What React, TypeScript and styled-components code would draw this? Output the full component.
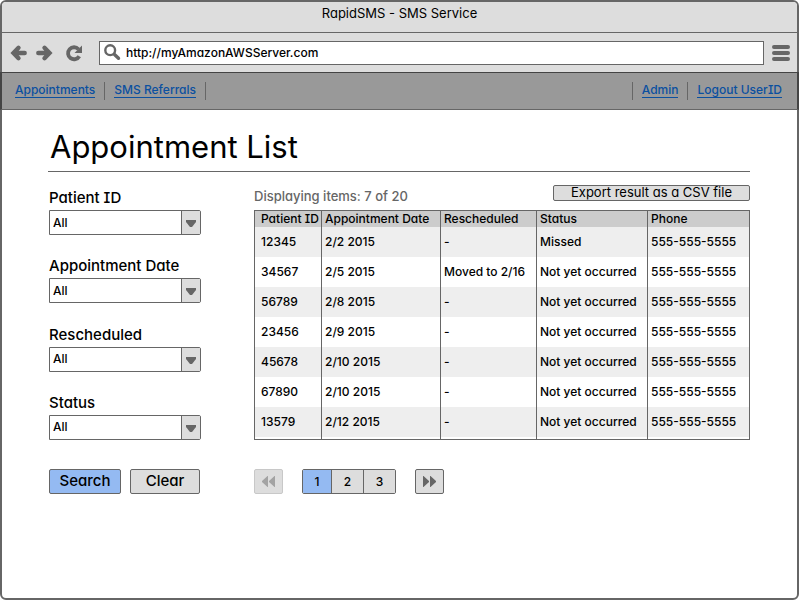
import React, { useState } from "react";
import styled, { createGlobalStyle } from "styled-components";

const ink = "#666";
const panel = "#ddd";
const accent = "#94baf2";

const GlobalStyle = createGlobalStyle`
  *, *::before, *::after { box-sizing: border-box; }
  body { margin: 0; background: #fff; }
  body, button, input, select {
    font-family: Inter, "Open Sans", sans-serif;
    font-feature-settings: "cv11", "cv08";
    font-size: 12px;
    font-weight: 500;
    color: #000;
  }
`;

const Window = styled.div`
  display: flex;
  flex-direction: column;
  min-height: 100vh;
  border: 2px solid ${ink};
  border-radius: 6px;
  background: #fff;
`;

const TitleBar = styled.header`
  height: 31px;
  padding-top: 2px;
  border-bottom: 1px solid ${ink};
  border-radius: 4px 4px 0 0;
  background: ${panel};
  font-size: 13px;
  font-weight: 400;
  text-align: center;
  line-height: 18px;
`;

const Toolbar = styled.div`
  display: flex;
  align-items: center;
  height: 39px;
  padding: 0 7px 0 8px;
  background: ${panel};
`;

const IconButton = styled.button<{ $gap: number }>`
  display: flex;
  margin: 0 ${(p) => p.$gap}px 0 0;
  padding: 0;
  border: 0;
  background: none;
  color: ${ink};
`;

const AddressBox = styled.label`
  display: flex;
  flex: 1;
  align-items: center;
  height: 24px;
  margin-right: 8px;
  padding-left: 4px;
  border: 1px solid ${ink};
  background: #fff;
  color: ${ink};
`;

const AddressInput = styled.input`
  flex: 1;
  min-width: 0;
  margin-left: 5px;
  padding: 0;
  border: 0;
  outline: 0;
  background: none;
`;

const NavBar = styled.nav`
  display: flex;
  justify-content: space-between;
  height: 38px;
  margin: 0 -2px;
  padding: 0 6px 0 4px;
  border: solid #444;
  border-width: 1px 2px;
  border-bottom-color: ${ink};
  background: #999;
`;

const NavGroup = styled.div`
  display: flex;
  padding-top: 9px;
`;

const NavItem = styled.span<{ $side: "left" | "right" }>`
  height: 18px;
  padding: 0 9px;
  border-${(p) => p.$side}: 1px solid ${ink};
`;

const NavLink = styled.a`
  display: block;
  height: 16px;
  border-bottom: 1px solid #0b50a0;
  color: #0b50a0;
  line-height: 15px;
  text-decoration: none;
`;

const Page = styled.main`
  padding: 0 47px 48px 46px;
`;

const Heading = styled.h1`
  margin: 0 0 13px;
  padding: 16px 0 4px 2px;
  border-bottom: 1px solid ${ink};
  font-size: 31px;
  font-weight: 400;
  line-height: 41px;
`;

const Columns = styled.div`
  display: grid;
  grid-template-columns: 152px 1fr;
  gap: 29px 53px;
  padding-left: 1px;
`;

const Filters = styled.form`
  display: flex;
  flex-direction: column;
  justify-content: space-between;
  padding-top: 3px;
`;

const Field = styled.label`
  display: block;
  font-size: 15px;
  line-height: 20px;
`;

const SelectBox = styled.span`
  display: block;
  position: relative;
  margin-top: 2px;
`;

const Select = styled.select`
  appearance: none;
  display: block;
  width: 100%;
  height: 25px;
  padding: 0 24px 1px 3px;
  border: 1px solid ${ink};
  border-radius: 0 2px 2px 0;
  background: #fff;
`;

const SelectArrow = styled.span`
  position: absolute;
  inset: 1px 1px 1px auto;
  display: flex;
  align-items: center;
  justify-content: center;
  width: 19px;
  padding-top: 2px;
  border-left: 1px solid ${ink};
  background: ${panel};
  color: ${ink};
  pointer-events: none;
`;

const Results = styled.section`
  min-width: 0;
`;

const ResultsHead = styled.div`
  display: flex;
  align-items: flex-start;
  justify-content: space-between;
  height: 25px;
`;

const Count = styled.p`
  margin: 0;
  padding-top: 2px;
  color: ${ink};
  font-size: 13px;
  line-height: 18px;
`;

const Button = styled.button<{ $primary?: boolean; $width: number }>`
  display: flex;
  align-items: center;
  justify-content: center;
  width: ${(p) => p.$width}px;
  height: 25px;
  padding: 0;
  border: 1px solid ${ink};
  border-radius: 2px;
  background: ${(p) => (p.$primary ? accent : panel)};
  color: ${ink};
  &:disabled {
    border-color: #c8c8c8;
    color: #a3a3a3;
  }
`;

const FormButton = styled(Button)`
  padding-bottom: 2px;
  color: #000;
  font-size: 15px;
`;

const ExportButton = styled(Button)`
  height: 16px;
  padding-bottom: 2px;
  color: #000;
  font-size: 13px;
  font-weight: 400;
`;

const Table = styled.table`
  width: 100%;
  table-layout: fixed;
  border: 1px solid ${ink};
  border-spacing: 0;
  line-height: 16px;
`;

const Col = styled.col<{ $width?: number }>`
  width: ${(p) => (p.$width ? `${p.$width}px` : "auto")};
`;

const Cell = styled.td`
  height: 30px;
  padding: 0 0 0 3px;
  white-space: nowrap;
  &:first-child { padding-left: 6px; }
  &:not(:last-child) { border-right: 1px solid ${ink}; }
`;

const HeadCell = styled(Cell).attrs({ as: "th", scope: "col" })`
  height: 16px;
  background: #ccc;
  font-weight: 500;
  text-align: left;
`;

const Row = styled.tr`
  &:nth-child(odd) { background: #eee; }
  &:last-child ${Cell} {
    height: 32px;
    padding-bottom: 2px;
    box-shadow: inset 0 -2px 0 #fff;
  }
`;

const Actions = styled.div`
  display: flex;
  gap: 9px;
`;

const Pager = styled.nav`
  display: flex;
  gap: 19px;
`;

const Pages = styled.div`
  display: flex;
  overflow: hidden;
  border: 1px solid ${ink};
  border-radius: 2px;
`;

const PageButton = styled.button<{ $current: boolean }>`
  width: 32px;
  height: 23px;
  padding: 0 0 1px;
  border: 0;
  background: ${(p) => (p.$current ? accent : panel)};
  &:first-child { width: 28px; }
  & + & { border-left: 1px solid ${ink}; }
`;

const ArrowIcon = ({ right = false }: { right?: boolean }) => (
  <svg width="18" height="18" viewBox="0 0 18 18" aria-hidden="true">
    <path
      transform={right ? "matrix(-1 0 0 1 18 0)" : undefined}
      d="M8.500 3.800 3.500 9l5 5.200M4 9h10.700"
      fill="none" stroke="currentColor" strokeWidth="4.400" strokeLinecap="round" strokeLinejoin="miter"
    />
  </svg>
);

const ReloadIcon = () => (
  <svg width="18" height="18" viewBox="0 0 18 18" aria-hidden="true">
    <path d="M13.500 5.200A6 6 0 1 0 14.300 12.200" fill="none" stroke="currentColor" strokeWidth="3.800" />
    <path d="M17 1.500v7.500h-7.500z" fill="currentColor" />
  </svg>
);

const SearchIcon = () => (
  <svg width="17" height="17" viewBox="0 0 17 17" aria-hidden="true">
    <circle cx="6.200" cy="6.200" r="4.900" fill="none" stroke="currentColor" strokeWidth="2.400" />
    <path d="m10.500 10.500 4 3.800" stroke="currentColor" strokeWidth="3.400" strokeLinecap="round" />
  </svg>
);

const MenuIcon = () => (
  <svg width="18" height="18" viewBox="0 0 18 18" aria-hidden="true">
    <path d="M2 3h14M2 9h14M2 15h14" stroke="currentColor" strokeWidth="4" strokeLinecap="round" />
  </svg>
);

const DownIcon = () => (
  <svg width="10" height="7" viewBox="0 0 10 7" aria-hidden="true">
    <path d="M0 0h10v2L6 7H4L0 2z" fill="currentColor" />
  </svg>
);

const DoubleIcon = ({ right = false }: { right?: boolean }) => (
  <svg width="13" height="11" viewBox="0 0 13 11" aria-hidden="true">
    <path
      transform={right ? "matrix(-1 0 0 1 13 0)" : undefined}
      d="M5.500 0H6v11h-.5L0 6V5zM12.500 0h.5v11h-.5L7 6V5z"
      fill="currentColor"
    />
  </svg>
);

const filters = ["Patient ID", "Appointment Date", "Rescheduled", "Status"];
const columns = ["Patient ID", "Appointment Date", "Rescheduled", "Status", "Phone"];
const columnWidths = [67, 119, 96, 111, undefined];
const rows = [
  ["12345", "2/2 2015", "-", "Missed"],
  ["34567", "2/5 2015", "Moved to 2/16", "Not yet occurred"],
  ["56789", "2/8 2015", "-", "Not yet occurred"],
  ["23456", "2/9 2015", "-", "Not yet occurred"],
  ["45678", "2/10 2015", "-", "Not yet occurred"],
  ["67890", "2/10 2015", "-", "Not yet occurred"],
  ["13579", "2/12 2015", "-", "Not yet occurred"],
].map((row) => [...row, "555-555-5555"]);

export default function App() {
  const [page, setPage] = useState(1);
  return (
    <>
      <GlobalStyle />
      <Window>
        <TitleBar>RapidSMS - SMS Service</TitleBar>
        <Toolbar>
          <IconButton $gap={7} aria-label="Back"><ArrowIcon /></IconButton>
          <IconButton $gap={12} aria-label="Forward"><ArrowIcon right /></IconButton>
          <IconButton $gap={16} aria-label="Reload"><ReloadIcon /></IconButton>
          <AddressBox>
            <SearchIcon />
            <AddressInput aria-label="Address" defaultValue="http://myAmazonAWSServer.com" />
          </AddressBox>
          <IconButton $gap={0} aria-label="Menu"><MenuIcon /></IconButton>
        </Toolbar>
        <NavBar>
          <NavGroup>
            <NavItem $side="right"><NavLink href="#appointments">Appointments</NavLink></NavItem>
            <NavItem $side="right"><NavLink href="#referrals">SMS Referrals</NavLink></NavItem>
          </NavGroup>
          <NavGroup>
            <NavItem $side="left"><NavLink href="#admin">Admin</NavLink></NavItem>
            <NavItem $side="left"><NavLink href="#logout">Logout UserID</NavLink></NavItem>
          </NavGroup>
        </NavBar>
        <Page>
          <Heading>Appointment List</Heading>
          <Columns>
            <Filters id="filters">
              {filters.map((name) => (
                <Field key={name}>
                  {name}
                  <SelectBox>
                    <Select name={name}><option>All</option></Select>
                    <SelectArrow><DownIcon /></SelectArrow>
                  </SelectBox>
                </Field>
              ))}
            </Filters>
            <Results>
              <ResultsHead>
                <Count>Displaying items: 7 of 20</Count>
                <ExportButton $width={197}>Export result as a CSV file</ExportButton>
              </ResultsHead>
              <Table>
                <colgroup>
                  {columnWidths.map((width, i) => <Col key={i} $width={width} />)}
                </colgroup>
                <thead>
                  <tr>{columns.map((name) => <HeadCell key={name}>{name}</HeadCell>)}</tr>
                </thead>
                <tbody>
                  {rows.map((row) => (
                    <Row key={row[0]}>
                      {row.map((value, i) => <Cell key={i}>{value}</Cell>)}
                    </Row>
                  ))}
                </tbody>
              </Table>
            </Results>
            <Actions>
              <FormButton $primary $width={72} type="submit" form="filters">Search</FormButton>
              <FormButton $width={70} type="reset" form="filters">Clear</FormButton>
            </Actions>
            <Pager aria-label="Pages">
              <Button $width={29} disabled={page === 1} aria-label="Previous page" onClick={() => setPage(page - 1)}>
                <DoubleIcon />
              </Button>
              <Pages>
                {[1, 2, 3].map((n) => (
                  <PageButton key={n} $current={n === page} onClick={() => setPage(n)}>{n}</PageButton>
                ))}
              </Pages>
              <Button $width={29} disabled={page === 3} aria-label="Next page" onClick={() => setPage(page + 1)}>
                <DoubleIcon right />
              </Button>
            </Pager>
          </Columns>
        </Page>
      </Window>
    </>
  );
}
